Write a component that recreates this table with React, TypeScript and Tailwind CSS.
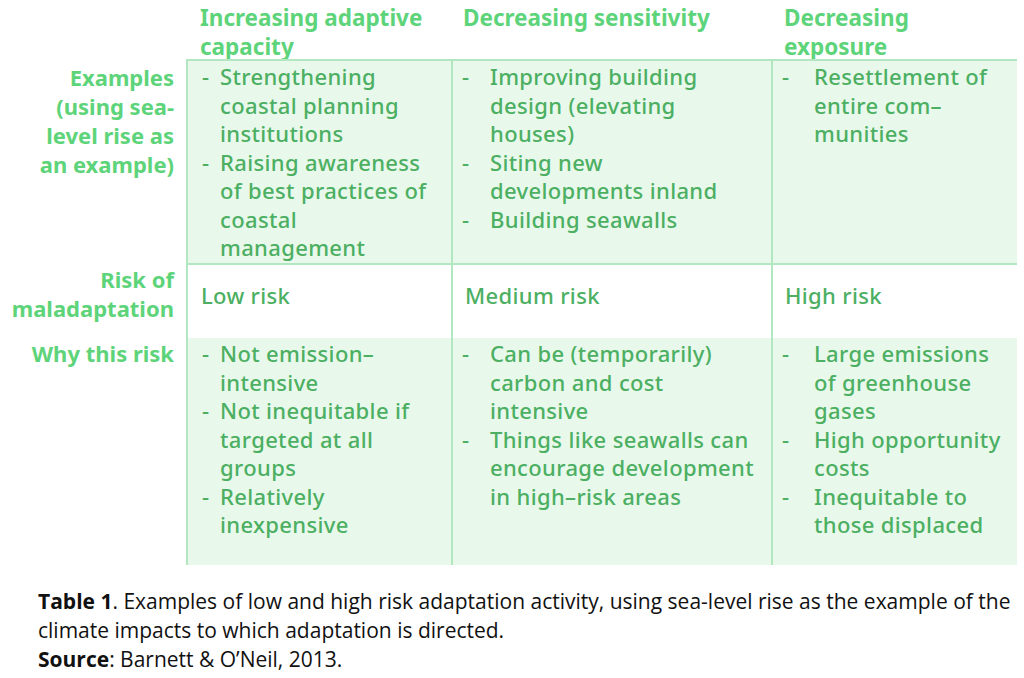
const headerCls = "text-[22.5px] font-bold leading-[29px] text-[#5ed47a] whitespace-nowrap";
const bodyCls = "text-[22px] font-medium leading-[28.5px] text-[#4caf62] whitespace-nowrap tracking-[0.35px]";
const labelCls = "text-[22px] font-bold leading-[29px] text-[#5ed47a] text-right pr-3 whitespace-nowrap";

type Col = {
  head: string[];
  examples: string[][];
  risk: string;
  why: string[][];
  dash: string;
  pad: string;
  headPad: string;
};

const cols: Col[] = [
  {
    head: ["Increasing adaptive", "capacity"],
    examples: [
      ["Strengthening", "coastal planning", "institutions"],
      ["Raising awareness", "of best practices of", "coastal", "management"],
    ],
    risk: "Low risk",
    why: [
      ["Not emission\u2013", "intensive"],
      ["Not inequitable if", "targeted at all", "groups"],
      ["Relatively", "inexpensive"],
    ],
    dash: "w-[32px] pl-[14px]",
    pad: "pl-[13px]",
    headPad: "pl-[14px]",
  },
  {
    head: ["Decreasing sensitivity"],
    examples: [
      ["Improving building", "design (elevating", "houses)"],
      ["Siting new", "developments inland"],
      ["Building seawalls"],
    ],
    risk: "Medium risk",
    why: [
      ["Can be (temporarily)", "carbon and cost", "intensive"],
      ["Things like seawalls can", "encourage development", "in high\u2013risk areas"],
    ],
    dash: "w-[37px] pl-[9px]",
    pad: "pl-[12px]",
    headPad: "pl-[12px]",
  },
  {
    head: ["Decreasing", "exposure"],
    examples: [["Resettlement of", "entire com\u2013", "munities"]],
    risk: "High risk",
    why: [
      ["Large emissions", "of greenhouse", "gases"],
      ["High opportunity", "costs"],
      ["Inequitable to", "those displaced"],
    ],
    dash: "w-[41px] pl-[9px]",
    pad: "pl-[12px]",
    headPad: "pl-[13px]",
  },
];

function Bullets({ items, dash }: { items: string[][]; dash: string }) {
  return (
    <ul className="flex flex-col">
      {items.map((lines) => (
        <li key={lines.join(" ")} className={`flex ${bodyCls}`}>
          <span className={`shrink-0 ${dash}`}>-</span>
          <span>
            {lines.map((l) => (
              <span key={l} className="block">
                {l}
              </span>
            ))}
          </span>
        </li>
      ))}
    </ul>
  );
}

function Lines({ lines }: { lines: string[] }) {
  return (
    <>
      {lines.map((l) => (
        <span key={l} className="block">
          {l}
        </span>
      ))}
    </>
  );
}

export default function App() {
  return (
    <div className="w-[1024px] h-[678px] bg-white overflow-hidden" style={{ fontFamily: "'Noto Sans', Inter, sans-serif" }}>
      <div className="grid grid-cols-[186px_265px_320px_246px] grid-rows-[59px_204px_75px_227px]">
        {/* header row */}
        <div />
        {cols.map((c) => (
          <div key={c.head.join()} className={`${headerCls} ${c.headPad} pt-[3px]`}>
            <Lines lines={c.head} />
          </div>
        ))}

        {/* examples row */}
        <div className={`${labelCls} pt-[4px]`}>
          <Lines lines={["Examples", "(using sea-", "level rise as", "an example)"]} />
        </div>
        {cols.map((c) => (
          <div key={c.head.join() + "e"} className="bg-[#e8f9ec] border-t-2 border-l-2 border-[#b3e7c2] pt-[1px]">
            <Bullets items={c.examples} dash={c.dash} />
          </div>
        ))}

        {/* risk row */}
        <div className={`${labelCls} pt-[2px]`}>
          <Lines lines={["Risk of", "maladaptation"]} />
        </div>
        {cols.map((c) => (
          <div key={c.head.join() + "r"} className={`border-t-2 border-l-2 border-[#b3e7c2] pt-[16px] ${c.pad} ${bodyCls}`}>
            {c.risk}
          </div>
        ))}

        {/* why row */}
        <div className={`${labelCls} pt-[1px]`}>Why this risk</div>
        {cols.map((c) => (
          <div key={c.head.join() + "w"} className="bg-[#e8f9ec] border-l-2 border-[#b3e7c2] pt-[1px]">
            <Bullets items={c.why} dash={c.dash} />
          </div>
        ))}
      </div>

      <div
        className="pl-[38px] pt-[22px] text-[21px] leading-[29px] text-[#111] whitespace-nowrap"
        style={{ fontFamily: "'Open Sans', sans-serif" }}
      >
        <p>
          <span className="font-bold">Table 1</span>. Examples of low and high risk adaptation activity, using sea-level rise as the example of the
        </p>
        <p>climate impacts to which adaptation is directed.</p>
        <p>
          <span className="font-bold">Source</span>: Barnett &amp; O’Neil, 2013.
        </p>
      </div>
    </div>
  );
}
